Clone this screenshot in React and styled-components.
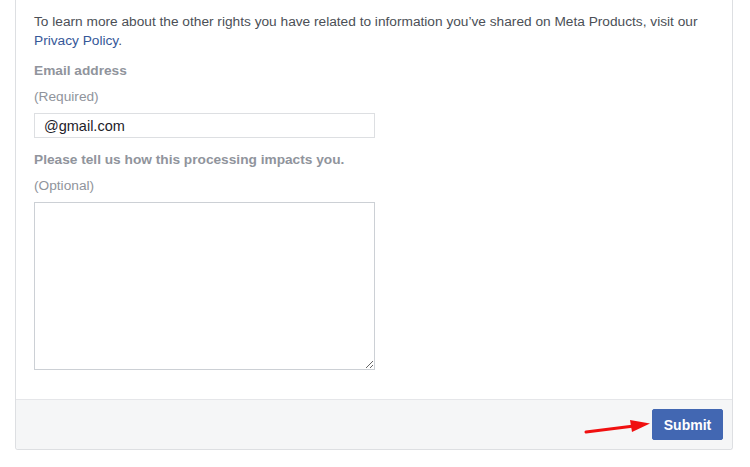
import React from 'react';
import styled, { createGlobalStyle } from 'styled-components';

const Global = createGlobalStyle`
  body {
    margin: 0;
    background: #ffffff;
    font-family: "Liberation Sans", Arial, Helvetica, sans-serif;
  }
`;

const Card = styled.div`
  margin-left: 15px;
  width: 716px;
  border: 1px solid #dddfe2;
  border-top: none;
  border-radius: 0 0 3px 3px;
  background: #fff;
`;

const Body = styled.div`
  padding: 12px 18px 29px 18px;
  display: flex;
  flex-direction: column;
`;

const Intro = styled.p`
  margin: 0;
  font-size: 13.7px;
  line-height: 19px;
  color: #4b4f56;
`;

const Link = styled.a`
  color: #365899;
  text-decoration: none;
`;

const Label = styled.div`
  margin-top: ${p => p.$top}px;
  font-size: 13.7px;
  line-height: 19px;
  font-weight: bold;
  color: #90949c;
`;

const Hint = styled.div`
  margin-top: 7px;
  font-size: 13.7px;
  line-height: 19px;
  color: #90949c;
`;

const Input = styled.input`
  margin-top: 7px;
  box-sizing: border-box;
  width: 341px;
  height: 25px;
  padding: 0 9px;
  border: 1px solid #dddfe2;
  font-family: inherit;
  font-size: 14.5px;
  color: #1d2129;
  outline: none;
`;

const TextArea = styled.textarea`
  margin-top: 7px;
  box-sizing: border-box;
  width: 341px;
  height: 168px;
  border: 1px solid #ccd0d5;
  font-family: inherit;
  font-size: 14px;
  outline: none;
  resize: both;
`;

const Footer = styled.div`
  display: flex;
  justify-content: flex-end;
  align-items: center;
  padding: 9px 9px 9px 0;
  border-top: 1px solid #e5e6e9;
  background: #f5f6f7;
  border-radius: 0 0 3px 3px;
`;

const ButtonWrap = styled.div`
  position: relative;
`;

const Arrow = styled.svg`
  position: absolute;
  left: -68px;
  top: 10px;
`;

const Button = styled.button`
  width: 71px;
  height: 31px;
  border: 1px solid #4267b2;
  border-radius: 2px;
  background: #4267b2;
  color: #fff;
  font-family: inherit;
  font-size: 14px;
  font-weight: bold;
  cursor: pointer;
`;

export default function App() {
  return (
    <>
      <Global />
      <Card>
        <Body>
          <Intro>
            To learn more about the other rights you have related to information you’ve shared on Meta Products, visit our{' '}
            <Link href="#">Privacy Policy</Link>.
          </Intro>
          <Label $top={11}>Email address</Label>
          <Hint>(Required)</Hint>
          <Input defaultValue="@gmail.com" />
          <Label $top={12}>Please tell us how this processing impacts you.</Label>
          <Hint>(Optional)</Hint>
          <TextArea />
        </Body>
        <Footer>
          <ButtonWrap>
            <Arrow width="68" height="16" viewBox="0 0 68 16">
              <line x1="2" y1="13" x2="50" y2="7" stroke="#f01010" strokeWidth="3" strokeLinecap="round" />
              <polygon points="46,1 66,4.5 48,13" fill="#f01010" />
            </Arrow>
            <Button>Submit</Button>
          </ButtonWrap>
        </Footer>
      </Card>
    </>
  );
}
